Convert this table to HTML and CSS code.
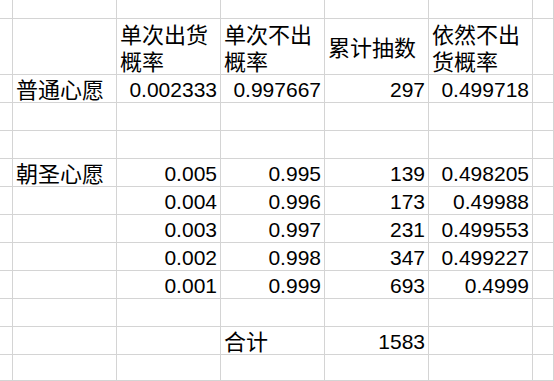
FILE: index.html
```html
<!DOCTYPE html>
<html lang="zh-CN">
<head>
<meta charset="utf-8">
<title>Sheet</title>
<link rel="stylesheet" href="styles.css">
</head>
<body>
<div class="sheet">
  <!-- row 1 -->
  <div class="c"></div><div class="c"></div><div class="c"></div><div class="c"></div><div class="c"></div><div class="c"></div><div class="c"></div>
  <!-- row 2: header -->
  <div class="c"></div>
  <div class="c"></div>
  <div class="c hd">单次出货概率</div>
  <div class="c hd">单次不出概率</div>
  <div class="c hd">累计抽数</div>
  <div class="c hd">依然不出货概率</div>
  <div class="c"></div>
  <!-- row 3 -->
  <div class="c"></div>
  <div class="c zh">普通心愿</div>
  <div class="c num">0.002333</div>
  <div class="c num">0.997667</div>
  <div class="c num">297</div>
  <div class="c num">0.499718</div>
  <div class="c"></div>
  <!-- row 4 -->
  <div class="c"></div><div class="c"></div><div class="c"></div><div class="c"></div><div class="c"></div><div class="c"></div><div class="c"></div>
  <!-- row 5 -->
  <div class="c"></div><div class="c"></div><div class="c"></div><div class="c"></div><div class="c"></div><div class="c"></div><div class="c"></div>
  <!-- row 6 -->
  <div class="c"></div>
  <div class="c zh">朝圣心愿</div>
  <div class="c num">0.005</div>
  <div class="c num">0.995</div>
  <div class="c num">139</div>
  <div class="c num">0.498205</div>
  <div class="c"></div>
  <!-- row 7 -->
  <div class="c"></div>
  <div class="c"></div>
  <div class="c num">0.004</div>
  <div class="c num">0.996</div>
  <div class="c num">173</div>
  <div class="c num">0.49988</div>
  <div class="c"></div>
  <!-- row 8 -->
  <div class="c"></div>
  <div class="c"></div>
  <div class="c num">0.003</div>
  <div class="c num">0.997</div>
  <div class="c num">231</div>
  <div class="c num">0.499553</div>
  <div class="c"></div>
  <!-- row 9 -->
  <div class="c"></div>
  <div class="c"></div>
  <div class="c num">0.002</div>
  <div class="c num">0.998</div>
  <div class="c num">347</div>
  <div class="c num">0.499227</div>
  <div class="c"></div>
  <!-- row 10 -->
  <div class="c"></div>
  <div class="c"></div>
  <div class="c num">0.001</div>
  <div class="c num">0.999</div>
  <div class="c num">693</div>
  <div class="c num">0.4999</div>
  <div class="c"></div>
  <!-- row 11 -->
  <div class="c"></div><div class="c"></div><div class="c"></div><div class="c"></div><div class="c"></div><div class="c"></div><div class="c"></div>
  <!-- row 12 -->
  <div class="c"></div>
  <div class="c"></div>
  <div class="c"></div>
  <div class="c zh">合计</div>
  <div class="c num">1583</div>
  <div class="c"></div>
  <div class="c"></div>
  <!-- row 13 -->
  <div class="c"></div><div class="c"></div><div class="c"></div><div class="c"></div><div class="c"></div><div class="c"></div><div class="c"></div>
</div>
</body>
</html>
```
FILE: styles.css
```css
html, body {
  margin: 0;
  padding: 0;
  background: #ffffff;
  height: 100%;
  overflow: hidden;
}

.sheet {
  display: grid;
  grid-template-columns: 13px repeat(5, 104px) 1fr;
  grid-template-rows: 19px 56px repeat(10, 28px) 1fr;
  height: 100vh;
  width: 100vw;
  color: #000000;
}

.c {
  box-sizing: border-box;
  border-right: 1px solid #d4d4d4;
  border-bottom: 1px solid #d4d4d4;
  display: flex;
  align-items: flex-end;
  min-width: 0;
  white-space: nowrap;
}

.hd {
  align-items: center;
  white-space: normal;
  font-family: "Noto Sans CJK SC", "Noto Sans", sans-serif;
  font-size: 22px;
  line-height: 27px;
  padding: 0 3px;
}

.zh {
  font-family: "Noto Sans CJK SC", "Noto Sans", sans-serif;
  font-size: 22px;
  line-height: 27px;
  padding: 0 3px;
}

.num {
  justify-content: flex-end;
  font-family: "Liberation Sans", Arial, sans-serif;
  font-size: 21px;
  line-height: 24px;
  padding: 0 3px;
}
```
